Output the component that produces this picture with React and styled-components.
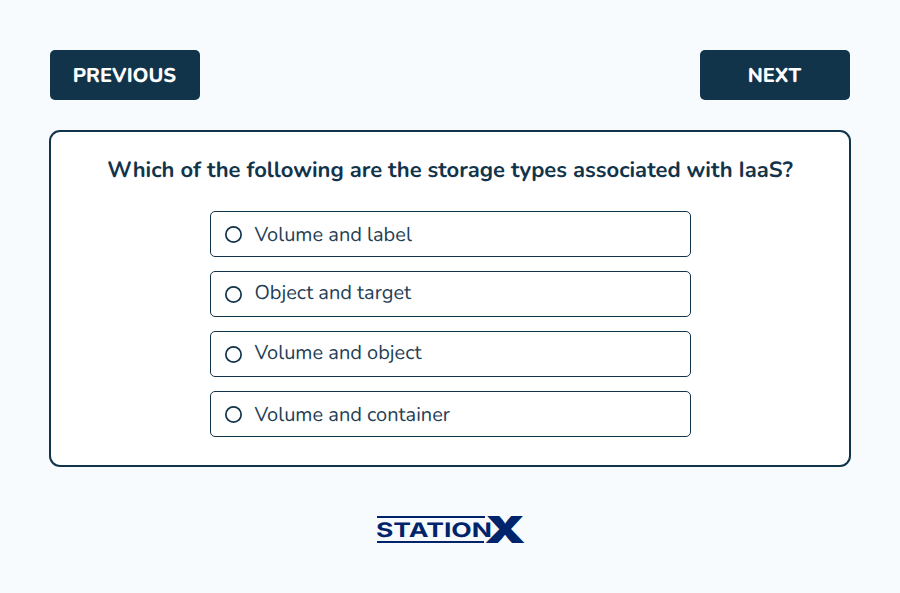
import React, { useState } from "react";
import styled, { createGlobalStyle } from "styled-components";

const GlobalStyle = createGlobalStyle`
  * {
    box-sizing: border-box;
  }

  body {
    margin: 0;
    background: #f7fbfe;
    color: #12344b;
    font-family: Nunito, Lato, sans-serif;
    text-rendering: geometricPrecision;
  }
`;

const Page = styled.main`
  display: flex;
  flex-direction: column;
  align-items: center;
  width: 900px;
  height: 593px;
  padding-top: 50px;
`;

const Toolbar = styled.nav`
  display: flex;
  justify-content: space-between;
  width: 800px;
`;

const NavButton = styled.button`
  width: 150px;
  height: 50px;
  padding: 2px 1px 0 0;
  border: 0;
  border-radius: 5px;
  background: #12344b;
  color: #fff;
  font-family: inherit;
  font-size: 20px;
  font-weight: 800;
  line-height: 50px;
  text-rendering: inherit;
`;

const Card = styled.section`
  display: flex;
  flex-direction: column;
  align-items: center;
  width: 802px;
  height: 337px;
  margin-top: 30px;
  border: 2px solid #12344b;
  border-radius: 11px;
  background: #fff;
`;

const Question = styled.h1`
  margin: 23px 0 26px;
  font-size: 22px;
  font-weight: 700;
  line-height: 30px;
  white-space: nowrap;
`;

const Options = styled.div`
  display: flex;
  flex-direction: column;
  gap: 14px;
  padding-left: 1px;
`;

const Option = styled.label`
  display: flex;
  align-items: center;
  width: 481px;
  height: 46px;
  padding-left: 14px;
  border: 1px solid #12344b;
  border-radius: 5px;
`;

const Radio = styled.input`
  appearance: none;
  flex: none;
  width: 17px;
  height: 17px;
  margin: 1px 12.5px 0 0;
  border-radius: 50%;
  box-shadow: inset 0 0 0 1.7px #12344b;

  &:checked {
    box-shadow: inset 0 0 0 1.7px #12344b, inset 0 0 0 4px #fff;
    background: #12344b;
  }
`;

const OptionText = styled.span`
  padding-top: ${(props) => (props.$raised ? "0" : "4px")};
  color: #1f4056;
  font-size: 20px;
  font-weight: 400;
  line-height: 28px;
`;

const Logo = styled.svg`
  display: block;
  width: 150px;
  height: 32px;
  margin-top: 46px;
  overflow: visible;
`;

const options = [
  { text: "Volume and label" },
  { text: "Object and target", raised: true },
  { text: "Volume and object", raised: true },
  { text: "Volume and container" },
];

const StationLogo = () => (
  <Logo viewBox="0 0 150 32" fill="#00246b" role="img" aria-label="StationX">
    <path d="M2 3h108v2H2zM2 28h107v2H2z" />
    <g fontFamily="Inter">
      <text
        x="1"
        y="24"
        fontSize="20"
        fontWeight="700"
        textLength="116"
        lengthAdjust="spacingAndGlyphs"
      >
        STATION
      </text>
      <text
        x="109.5"
        y="30"
        fontSize="37"
        fontWeight="900"
        textLength="41"
        lengthAdjust="spacingAndGlyphs"
      >
        X
      </text>
    </g>
  </Logo>
);

const App = () => {
  const [selected, setSelected] = useState(null);

  return (
    <Page>
      <GlobalStyle />
      <Toolbar>
        <NavButton>PREVIOUS</NavButton>
        <NavButton>NEXT</NavButton>
      </Toolbar>
      <Card>
        <Question>
          Which of the following are the storage types associated with IaaS?
        </Question>
        <Options>
          {options.map((option) => (
            <Option key={option.text}>
              <Radio
                type="radio"
                name="answer"
                checked={selected === option.text}
                onChange={() => setSelected(option.text)}
              />
              <OptionText $raised={option.raised}>{option.text}</OptionText>
            </Option>
          ))}
        </Options>
      </Card>
      <StationLogo />
    </Page>
  );
};

export default App;
